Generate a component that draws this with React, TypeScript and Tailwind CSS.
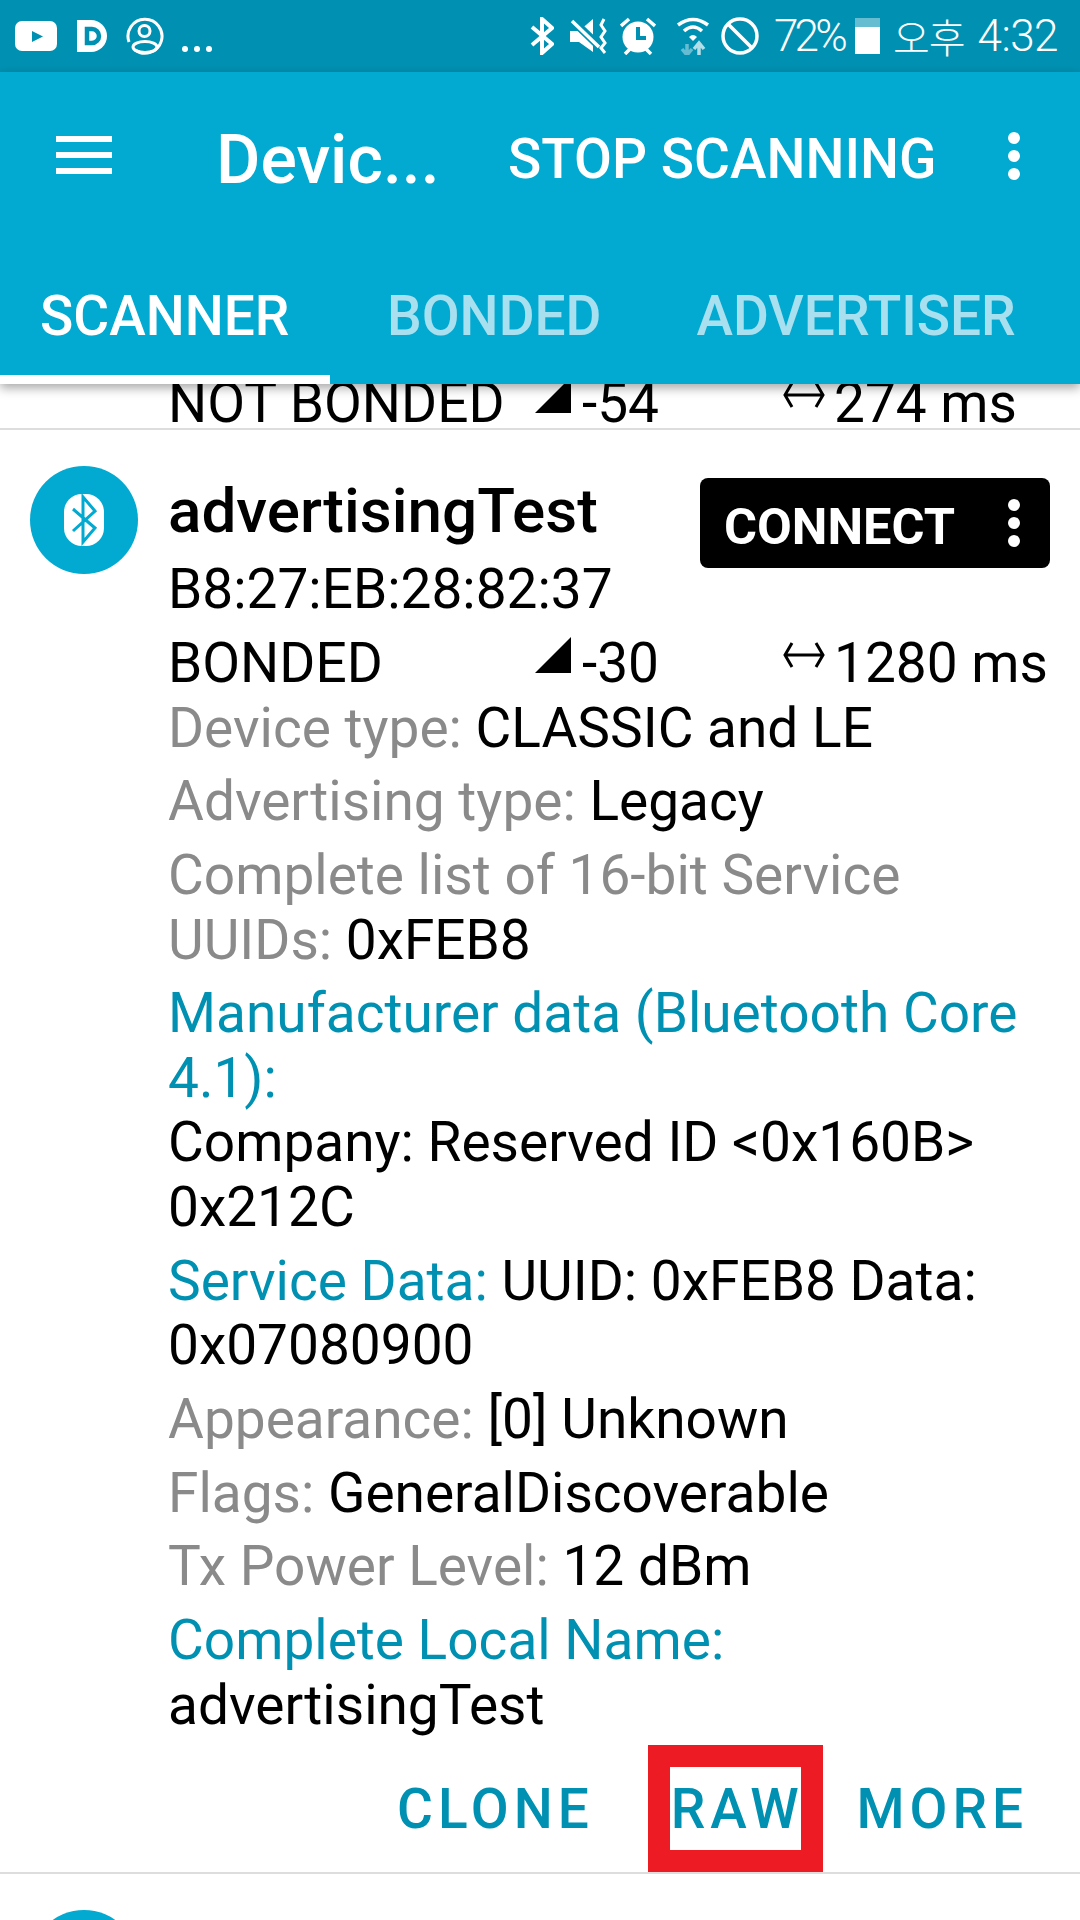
const bgStatus = 'bg-[#0091b2]'

function BtAvatar() {
  return (
    <div className="flex h-[108px] w-[108px] shrink-0 items-center justify-center rounded-full bg-[#02a9d0]">
      <svg width="40" height="52" viewBox="0 0 40 52">
        <rect width="40" height="52" rx="18" fill="#fff" />
        <path d="M9 15 L31 34 L19 48 L19 3 L31 17 L9 37" fill="none" stroke="#02a9d0" strokeWidth="3" />
      </svg>
    </div>
  )
}

function SignalRow({ status, rssi, interval }: { status: string; rssi: string; interval: string }) {
  return (
    <div className="grid grid-cols-[367px_248px_auto] text-[55px] leading-[64.5px] text-black">
      <span>{status}</span>
      <span className="flex items-center">
        <svg width="36" height="36" viewBox="0 0 36 36" className="mr-[11px] -mt-[16px]">
          <path d="M0 36 L36 0 L36 36 Z" fill="#000" />
        </svg>
        {rssi}
      </span>
      <span className="flex items-center">
        <svg width="42" height="28" viewBox="0 0 42 28" className="mr-[9px] -mt-[16px]">
          <path d="M9 2 L2 14 L9 26 M33 2 L40 14 L33 26 M2 14 L40 14" fill="none" stroke="#000" strokeWidth="3" />
        </svg>
        {interval}
      </span>
    </div>
  )
}

function Field({ label, children, blue }: { label: string; children?: React.ReactNode; blue?: boolean }) {
  return (
    <p className="mb-[9.45px] text-[55px] leading-[64.4px] text-black">
      <span className={blue ? 'text-[#0091b2]' : 'text-[#8a8a8a]'}>{label}</span> {children}
    </p>
  )
}

function StatusBar() {
  return (
    <div className={`flex h-[72px] items-center justify-between pl-[15px] pr-[22px] text-white ${bgStatus}`}>
      <div className="flex items-center">
        <svg width="42" height="30" viewBox="0 0 42 30">
          <rect width="42" height="30" rx="7" fill="#fff" />
          <path d="M17 10 L28 15.5 L17 21 Z" fill="#0091b2" />
        </svg>
        <svg width="31" height="32" viewBox="0 0 31 32" className="ml-[20px]">
          <path d="M0 0 H14 A16 16 0 0 1 14 32 H0 Z" fill="#fff" />
          <path d="M10 9 H15 A7 7 0 0 1 15 23 H10 Z" fill="none" stroke="#0091b2" strokeWidth="4.5" />
        </svg>
        <svg width="38" height="38" viewBox="0 0 38 38" className="ml-[18px]" fill="none" stroke="#fff" strokeWidth="3">
          <path d="M3 25 A17 17 0 1 1 9 33" />
          <circle cx="18.5" cy="14" r="5.5" />
          <ellipse cx="19" cy="30" rx="12" ry="5.5" />
        </svg>
        <span className="ml-[18px] flex h-[36px] items-end gap-[6px] pb-[2px]">
          <i className="h-[6px] w-[6px] rounded-full bg-white" />
          <i className="h-[6px] w-[6px] rounded-full bg-white" />
          <i className="h-[6px] w-[6px] rounded-full bg-white" />
        </span>
      </div>
      <div className="flex items-center">
        <svg width="24" height="38" viewBox="0 0 24 38" fill="none" stroke="#fff" strokeWidth="4">
          <path d="M2 10 L22 27 L12 36 L12 2 L22 11 L2 28" />
        </svg>
        <svg width="38" height="36" viewBox="0 0 38 36" className="ml-[16px]">
          <path d="M0 13 H9 L23 1 V34 L9 24 H0 Z" fill="#fff" />
          <path d="M3 3 L29 28" stroke="#0091b2" strokeWidth="8" />
          <path d="M2 3 L29 29" stroke="#fff" strokeWidth="3.5" />
          <path d="M34 1 L31 7 L35 13 L31 19 L35 25 L31 30 L35 35" fill="none" stroke="#fff" strokeWidth="3" />
        </svg>
        <svg width="36" height="38" viewBox="0 0 36 38" className="ml-[12px]">
          <circle cx="18" cy="20" r="15.5" fill="#fff" />
          <path d="M18 10 V21 H26" fill="none" stroke="#0091b2" strokeWidth="4" />
          <path d="M1 9 L9 2 M35 9 L27 2 M5 37 L10 32 M31 37 L26 32" stroke="#fff" strokeWidth="3.5" />
        </svg>
        <svg width="34" height="38" viewBox="0 0 34 38" className="ml-[20px]" fill="none">
          <path d="M2 8 Q17 -3 32 8" stroke="#fff" strokeWidth="3.5" />
          <path d="M8 14 Q17 6 26 14" stroke="#fff" strokeWidth="3.5" />
          <path d="M13 20 L17 24 L21 20 Q17 16 13 20 Z" fill="#fff" />
          <path d="M11 27 V38 M6 32 L11 38 L16 32" stroke="#fff" strokeOpacity="0.4" strokeWidth="3.5" />
          <path d="M23 38 V27 M18 32 L23 26 L28 32" stroke="#fff" strokeOpacity="0.7" strokeWidth="3.5" />
        </svg>
        <svg width="38" height="38" viewBox="0 0 38 38" className="ml-[11px]" fill="none" stroke="#fff" strokeWidth="3.5">
          <circle cx="19" cy="19" r="17" />
          <path d="M7 7 L31 31" />
        </svg>
        <span className="ml-[15px] font-[Roboto] text-[44px] font-light tracking-[-3.8px]">72%</span>
        <span className="ml-[11px] flex h-[36px] w-[25px] flex-col justify-end bg-white/40">
          <i className="h-[27px] w-full bg-white" />
        </span>
        <span className="ml-[13px] font-['Noto_Sans_CJK_KR'] text-[40px] font-light leading-none tracking-[-1px]">오후</span>
        <span className="ml-[13px] text-[44px] font-light tracking-[-0.5px]">4:32</span>
      </div>
    </div>
  )
}

function Toolbar() {
  return (
    <div className="relative z-10 bg-[#02a9d0] text-white shadow-[0_4px_10px_rgba(0,0,0,0.35)]">
      <div className="flex h-[168px] items-start">
        <div className="ml-[56px] mt-[64px] flex h-[38px] w-[56px] flex-col justify-between">
          <i className="h-[6px] bg-white" />
          <i className="h-[6px] bg-white" />
          <i className="h-[6px] bg-white" />
        </div>
        <span className="ml-[104px] mt-[48px] w-[225px] text-[68px] font-medium leading-[80px]">Devic...</span>
        <span className="ml-[67px] mt-[54px] text-[55px] font-medium leading-[66px]">STOP SCANNING</span>
        <span className="ml-[71px] mt-[60px] flex h-[48px] flex-col justify-between">
          <i className="h-[12px] w-[12px] rounded-full bg-white" />
          <i className="h-[12px] w-[12px] rounded-full bg-white" />
          <i className="h-[12px] w-[12px] rounded-full bg-white" />
        </span>
      </div>
      <div className="flex h-[144px] text-[55px] font-medium leading-[66px]">
        <div className="w-[330px] border-b-[9px] border-white pl-[40px] pt-[43px]">SCANNER</div>
        <div className="ml-[57px] pt-[43px] text-[#a8e0ef]">BONDED</div>
        <div className="ml-[95px] pt-[43px] text-[#a8e0ef]">ADVERTISER</div>
      </div>
    </div>
  )
}

export default function App() {
  return (
    <div className="h-[1920px] w-[1080px] overflow-hidden bg-white font-[Roboto]">
      <StatusBar />
      <Toolbar />

      {/* previous scan result, scrolled under the toolbar */}
      <div className="h-[44px] overflow-hidden pl-[168px] pr-[20px]">
        <div className="-mt-[13px]">
          <SignalRow status="NOT BONDED" rssi="-54" interval="274 ms" />
        </div>
      </div>
      <div className="h-[2px] bg-[#dddddd]" />

      <div className="relative flex h-[1442px] pl-[30px] pt-[36px]">
        <BtAvatar />
        <div className="ml-[30px] flex-1 pr-[30px]">
          <div className="mt-[12px] flex h-[90px] items-start justify-between">
            <span className="text-[62px] font-medium leading-[66px] text-black">advertisingTest</span>
            <div className="flex h-[90px] w-[350px] shrink-0 items-center rounded-[8px] bg-black pl-[24px] text-[50.5px] font-bold text-white">
              <span className="mt-[7px]">CONNECT</span>
              <span className="ml-[53px] flex h-[48px] flex-col justify-between">
                <i className="h-[12px] w-[12px] rounded-full bg-white" />
                <i className="h-[12px] w-[12px] rounded-full bg-white" />
                <i className="h-[12px] w-[12px] rounded-full bg-white" />
              </span>
            </div>
          </div>
          <p className="-mt-[11px] text-[55px] leading-[64.5px] text-black">B8:27:EB:28:82:37</p>
          <div className="mt-[9.5px]">
            <SignalRow status="BONDED" rssi="-30" interval="1280 ms" />
          </div>
          <Field label="Device type:">CLASSIC and LE</Field>
          <Field label="Advertising type:">Legacy</Field>
          <Field label="Complete list of 16-bit Service UUIDs:">0xFEB8</Field>
          <Field label="Manufacturer data (Bluetooth Core 4.1):" blue>
            <br />Company: Reserved ID &lt;0x160B&gt;<br />0x212C
          </Field>
          <Field label="Service Data:" blue>UUID: 0xFEB8 Data: 0x07080900</Field>
          <Field label="Appearance:">[0] Unknown</Field>
          <Field label="Flags:">GeneralDiscoverable</Field>
          <Field label="Tx Power Level:">12 dBm</Field>
          <Field label="Complete Local Name:" blue>
            <br />advertisingTest
          </Field>
          <div className="mt-[39px] flex justify-end pr-[22px] text-[55px] font-medium leading-[66px] tracking-[0.09em] text-[#0091b2]">
            <span>CLONE</span>
            <span className="ml-[77px]">RAW</span>
            <span className="ml-[53px]">MORE</span>
          </div>
        </div>
        {/* red annotation box drawn over the screenshot */}
        <div className="absolute left-[648px] top-[1315px] h-[127px] w-[175px] border-[22px] border-[#ed1c24]" />
      </div>
      <div className="h-[2px] bg-[#dddddd]" />
      <div className="pl-[30px] pt-[36px]">
        <BtAvatar />
      </div>
    </div>
  )
}
